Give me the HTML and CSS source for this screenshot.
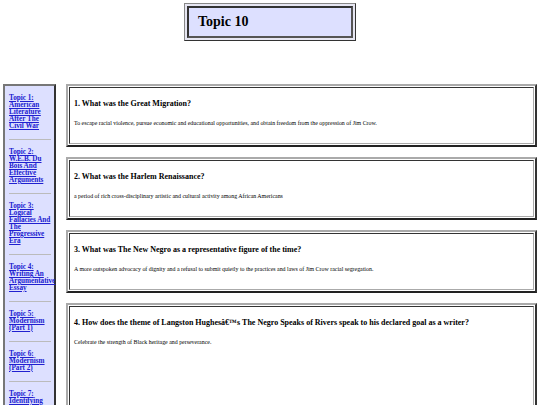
FILE: index.html
```html
<!DOCTYPE html>
<html>
<head>
<meta charset="utf-8">
<link rel="stylesheet" href="styles.css">
</head>
<body>
<div class="top">
  <div class="title-box"><div class="title-inner"><h1 class="title">Topic 10</h1></div></div>
</div>
<div class="main">
  <nav class="sidebar">
    <div class="nav-item"><a href="#">Topic 1:<br>American Literature After The Civil War</a></div>
    <hr class="sep">
    <div class="nav-item"><a href="#">Topic 2:<br>W.E.B. Du Bois And Effective Arguments</a></div>
    <hr class="sep">
    <div class="nav-item"><a href="#">Topic 3:<br>Logical Fallacies And The Progressive Era</a></div>
    <hr class="sep">
    <div class="nav-item"><a href="#">Topic 4:<br>Writing An Argumentative Essay</a></div>
    <hr class="sep">
    <div class="nav-item"><a href="#">Topic 5:<br>Modernism (Part 1)</a></div>
    <hr class="sep">
    <div class="nav-item"><a href="#">Topic 6:<br>Modernism (Part 2)</a></div>
    <hr class="sep">
    <div class="nav-item"><a href="#">Topic 7:<br>Identifying Dialect</a></div>
  </nav>
  <div class="cards">
    <div class="card"><div class="card-inner">
      <h2 class="q">1. What was the Great Migration?</h2>
      <p class="a">To escape racial violence, pursue economic and educational opportunities, and obtain freedom from the oppression of Jim Crow.</p>
    </div></div>
    <div class="card"><div class="card-inner">
      <h2 class="q">2. What was the Harlem Renaissance?</h2>
      <p class="a">a period of rich cross-disciplinary artistic and cultural activity among African Americans</p>
    </div></div>
    <div class="card"><div class="card-inner">
      <h2 class="q">3. What was The New Negro as a representative figure of the time?</h2>
      <p class="a">A more outspoken advocacy of dignity and a refusal to submit quietly to the practices and laws of Jim Crow racial segregation.</p>
    </div></div>
    <div class="card card-tall"><div class="card-inner">
      <h2 class="q">4. How does the theme of Langston Hughesâ€™s The Negro Speaks of Rivers speak to his declared goal as a writer?</h2>
      <p class="a">Celebrate the strength of Black heritage and perseverance.</p>
    </div></div>
  </div>
</div>
</body>
</html>
```
FILE: styles.css
```css
html, body {
  margin: 0;
  padding: 0;
  background: #ffffff;
  font-family: "Liberation Serif", "Times New Roman", serif;
  color: #000;
}
.top {
  display: flex;
  justify-content: center;
  padding-top: 3px;
  height: 84px;
  box-sizing: border-box;
}
.title-box {
  width: 172px;
  height: 38px;
  box-sizing: border-box;
  border: 1px solid #555;
  border-color: #888 #333 #333 #888;
  padding: 2px;
  background: #e6e6f2;
}
.title-inner {
  height: 100%;
  box-sizing: border-box;
  border: 2px solid #333;
  border-color: #333 #555 #555 #333;
  background: #dde0ff;
  display: flex;
  align-items: center;
  padding-left: 9px;
}
.title {
  margin: 0;
  font-size: 14px;
  font-weight: bold;
}
.main {
  display: flex;
  align-items: flex-start;
  padding: 0 3px 0 3px;
  gap: 10px;
}
.sidebar {
  width: 53px;
  flex: none;
  box-sizing: border-box;
  border: 2px solid #444;
  border-color: #777 #333 #333 #777;
  background: #dde0ff;
  padding: 6px 0 20px 4px;
  min-height: 340px;
}
.nav-item {
  font-size: 7.2px;
  line-height: 7px;
  font-weight: bold;
  padding: 3px 0;
}
.nav-item a {
  color: #2020d0;
  text-decoration: underline;
}
.sep {
  border: 0;
  border-top: 1px solid #bbb;
  margin: 6px 3px 6px 0;
  height: 0;
}
.cards {
  flex: 1;
  display: flex;
  flex-direction: column;
  gap: 10px;
}
.card {
  height: 63px;
  box-sizing: border-box;
  border: 2px solid #999;
  border-color: #aaa #333 #222 #aaa;
  padding: 1px;
  background: #fff;
}
.card-tall {
  height: 110px;
}
.card-inner {
  height: 100%;
  box-sizing: border-box;
  border: 1px solid #333;
  border-color: #333 #aaa #aaa #333;
  padding: 11px 4px 0 4px;
}
.q {
  margin: 0 0 11px 0;
  font-size: 8px;
  line-height: 10px;
  font-weight: bold;
}
.a {
  margin: 0;
  font-size: 5.9px;
  line-height: 7px;
}
```
